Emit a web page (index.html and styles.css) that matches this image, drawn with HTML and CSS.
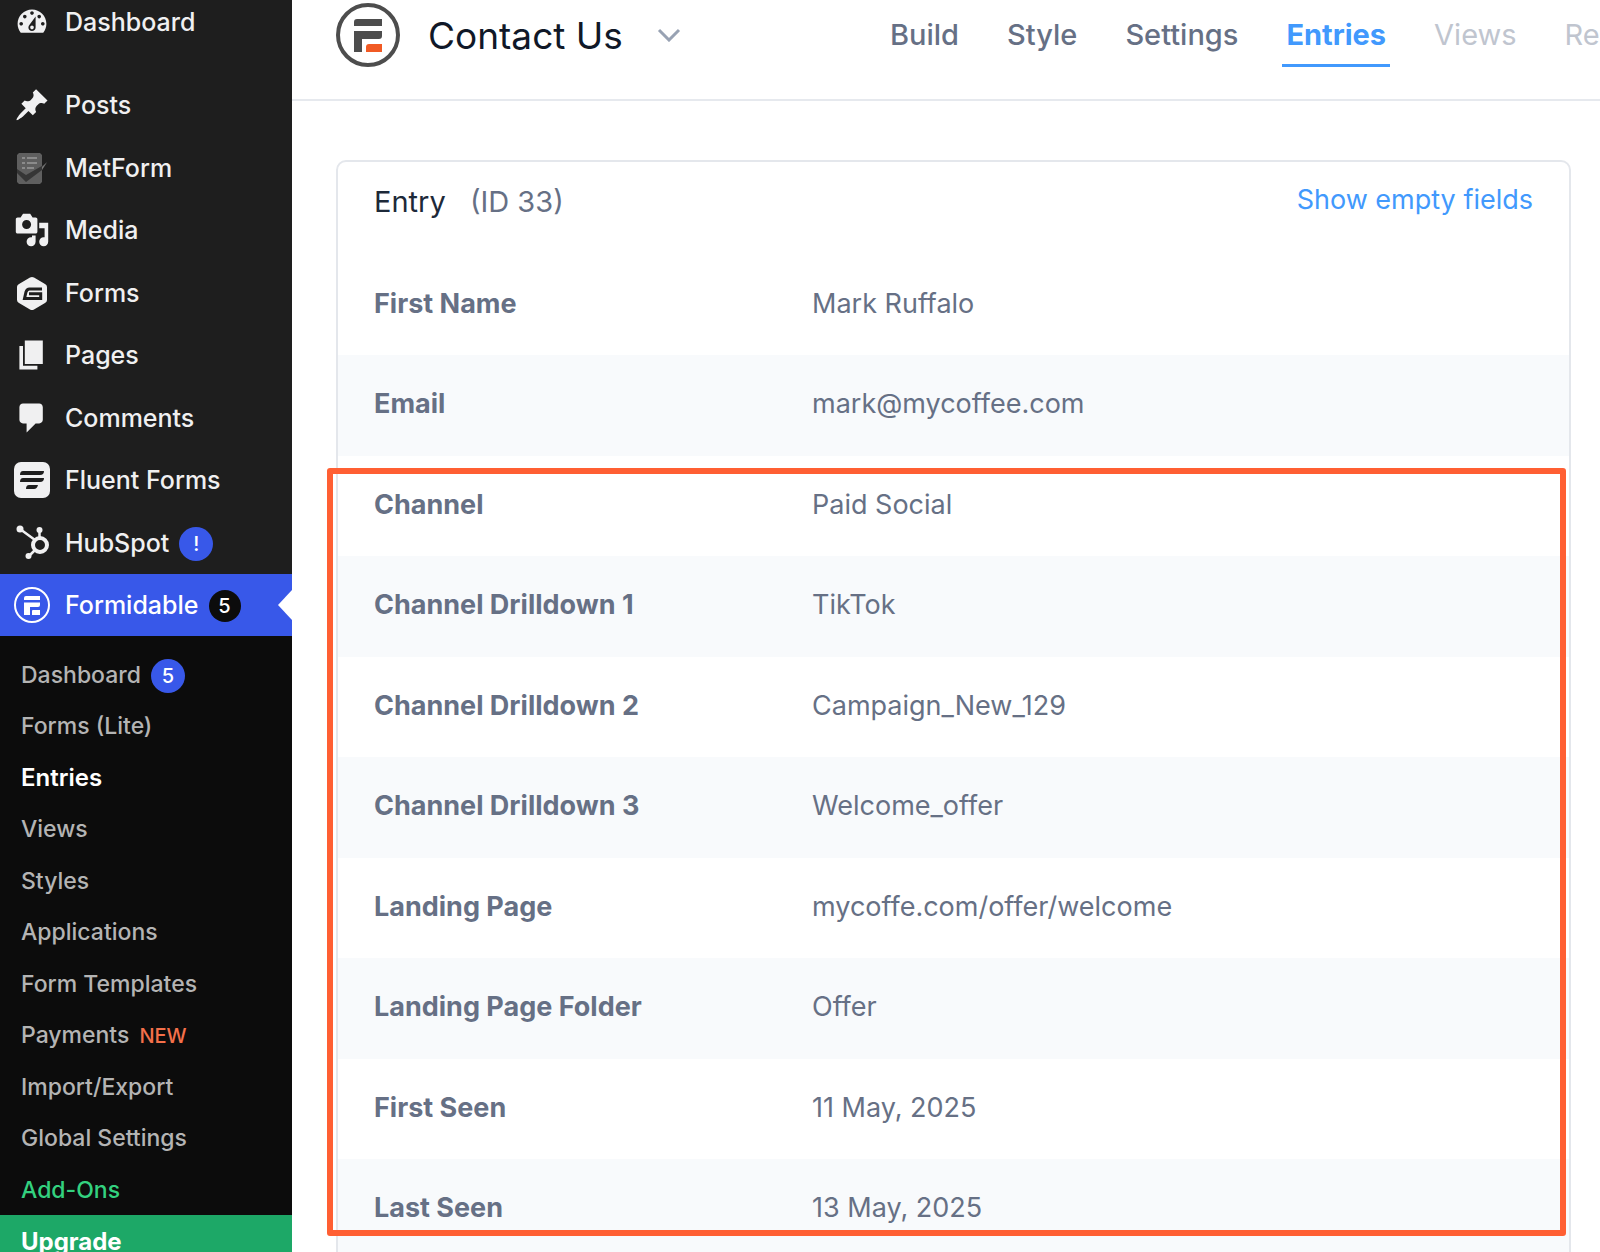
FILE: index.html
```html
<!DOCTYPE html>
<html lang="en">
<head>
    <meta charset="UTF-8">
    <meta name="viewport" content="width=device-width, initial-scale=1.0">
    <title>Contact Us - Entries</title>
    <link rel="stylesheet" href="styles.css">
</head>
<body>
    <div class="layout">
        <nav class="sidebar" aria-label="Admin menu">
            <ul class="menu-top">
                <li><a class="menu-item" href="#dashboard">
                    <svg class="icon" viewBox="0 0 20 20"><path d="M3.76 16h12.48c1.1-1.37 1.76-3.11 1.76-5 0-4.42-3.58-8-8-8s-8 3.58-8 8c0 1.89.66 3.63 1.76 5zM10 4c.55 0 1 .45 1 1s-.45 1-1 1-1-.45-1-1 .45-1 1-1zM6 6c.55 0 1 .45 1 1s-.45 1-1 1-1-.45-1-1 .45-1 1-1zm8 0c.55 0 1 .45 1 1s-.45 1-1 1-1-.45-1-1 .45-1 1-1zm-5.37 5.55L12 7v6c0 1.1-.9 2-2 2s-2-.9-2-2c0-.57.24-1.08.63-1.45zM4 10c.55 0 1 .45 1 1s-.45 1-1 1-1-.45-1-1 .45-1 1-1zm12 0c.55 0 1 .45 1 1s-.45 1-1 1-1-.45-1-1 .45-1 1-1zm-5 3c0-.55-.45-1-1-1s-1 .45-1 1 .45 1 1 1 1-.45 1-1z"/></svg>
                    Dashboard</a></li>
            </ul>
            <ul class="menu">
                <li><a class="menu-item" href="#posts">
                    <svg class="icon" viewBox="0 0 20 20"><path d="M10.44 3.02l1.82-1.82 6.36 6.35-1.83 1.82c-1.05-.68-2.48-.57-3.41.36l-.75.75c-.92.93-1.04 2.35-.35 3.41l-1.83 1.82-2.41-2.41-2.8 2.79c-.42.42-3.38 2.71-3.8 2.29s1.86-3.39 2.28-3.81l2.79-2.79L4.1 9.36l1.83-1.82c1.05.69 2.48.57 3.4-.36l.75-.75c.93-.92 1.05-2.35.36-3.41z"/></svg>
                    Posts</a></li>
                <li><a class="menu-item" href="#metform">
                    <svg class="icon" viewBox="0 0 36 36">
                        <path fill="#5f5f5f" d="M5 3h21l2 2v27l-2 2H5l-2-2V5z"/>
                        <path stroke="#8b8b8b" stroke-width="2" d="M8 8h3M13 8h10M8 13h3M13 13h10M8 18h3M13 18h7"/>
                        <path fill="#363636" d="M3 19l9 6 21-12-5 7-16 12-9-9z"/>
                        <path fill="#777" d="M28 17l5-5-5 8z"/>
                    </svg>
                    MetForm</a></li>
                <li><a class="menu-item" href="#media">
                    <svg class="icon" viewBox="0 0 20 20"><path d="M13 11V4c0-.55-.45-1-1-1h-1.67L9 1H5L3.67 3H2c-.55 0-1 .45-1 1v7c0 .55.45 1 1 1h10c.55 0 1-.45 1-1zM7 4.5c1.38 0 2.5 1.12 2.5 2.5S8.38 9.5 7 9.5 4.5 8.38 4.5 7 5.62 4.5 7 4.5zM14 6h5v10.5c0 1.38-1.12 2.5-2.5 2.5S14 17.88 14 16.5s1.12-2.5 2.5-2.5c.17 0 .34.02.5.05V9h-3V6zm-4 8.05V13h2v3.5c0 1.38-1.12 2.5-2.5 2.5S7 17.88 7 16.5 8.12 14 9.5 14c.17 0 .34.02.5.05z"/></svg>
                    Media</a></li>
                <li><a class="menu-item" href="#gravity">
                    <svg class="icon" viewBox="0 0 36 36">
                        <path d="M16 2.500q2-1 4 0l11 6.500q2 1 2 3v13q0 2-2 3l-11 6.500q-2 1-4 0l-11-6.500q-2-1-2-3V12q0-2 2-3z"/>
                        <path fill="none" stroke="#1e1e1e" stroke-width="3" d="M28 14H15.500q-2.500 0-3.500 3l-1.500 6.500h16.200v-4.800H15"/>
                    </svg>
                    Forms</a></li>
                <li><a class="menu-item" href="#pages">
                    <svg class="icon" viewBox="0 0 20 20"><path d="M6 15V2h10v13H6zm-1 1h8v2H3V5h2v11z"/></svg>
                    Pages</a></li>
                <li><a class="menu-item" href="#comments">
                    <svg class="icon" viewBox="0 0 20 20"><path d="M5 2h9c1.100 0 2 .9 2 2v7c0 1.100-.9 2-2 2h-2l-5 5v-5H5c-1.100 0-2-.9-2-2V4c0-1.100.9-2 2-2z"/></svg>
                    Comments</a></li>
                <li><a class="menu-item" href="#fluent">
                    <svg class="icon" viewBox="0 0 36 36">
                        <rect width="36" height="36" rx="7"/>
                        <path fill="#1e1e1e" d="M9 9h21q0 4-4 4H6q0-4 3-4zM9 16h21q0 4-4 4H6q0-4 3-4zM15 23h9q-1 4-4 4h-8q0-4 3-4z"/>
                    </svg>
                    Fluent Forms</a></li>
                <li><a class="menu-item" href="#hubspot">
                    <svg class="icon" viewBox="0 0 36 36">
                        <g fill="none" stroke="#f0f0f1">
                            <circle cx="26" cy="20" r="7" stroke-width="4"/>
                            <path stroke-width="2.500" d="M6 4l15 11M25.500 5v8M21 25l-6 6"/>
                        </g>
                        <circle cx="6" cy="4" r="3.500"/><circle cx="25.500" cy="5" r="3"/><circle cx="14.500" cy="31" r="3"/>
                    </svg>
                    HubSpot <span class="badge">!</span></a></li>
                <li class="current"><a class="menu-item" href="#formidable" aria-current="true">
                    <svg class="icon" viewBox="0 0 36 36">
                        <circle cx="18" cy="18" r="17" fill="none" stroke="#fff" stroke-width="2"/>
                        <path fill="#fff" d="M12 9h14v4H10v-2q0-2 2-2zM10 15.500h16v2.500q0 2-2 2h-8v8h-6zM19 23h7v5h-8v-4q0-1 1-1z"/>
                    </svg>
                    Formidable <span class="badge badge-dark">5</span></a></li>
            </ul>
            <ul class="submenu">
                <li><a href="#overview">Dashboard <span class="badge">5</span></a></li>
                <li><a href="#forms-lite">Forms (Lite)</a></li>
                <li><a class="selected" href="#entries">Entries</a></li>
                <li><a href="#views">Views</a></li>
                <li><a href="#styles">Styles</a></li>
                <li><a href="#applications">Applications</a></li>
                <li><a href="#templates">Form Templates</a></li>
                <li><a href="#payments">Payments <span class="new">NEW</span></a></li>
                <li><a href="#import">Import/Export</a></li>
                <li><a href="#settings">Global Settings</a></li>
                <li><a class="addons" href="#addons">Add-Ons</a></li>
                <li><a class="upgrade" href="#upgrade">Upgrade</a></li>
            </ul>
        </nav>

        <div class="content">
            <header class="topbar">
                <div class="form-name">
                    <svg class="logo" viewBox="0 0 64 64">
                        <circle cx="32" cy="32" r="30" fill="#fff" stroke="#4d4d4d" stroke-width="4"/>
                        <path fill="#4d4d4d" d="M21 16h25v7H18v-4q0-3 3-3zM18 28h28v5q0 3-3 3H26v13h-8z"/>
                        <path fill="#f15a24" d="M33 41h13v8H30v-5q0-3 3-3z"/>
                    </svg>
                    <h1>Contact Us</h1>
                    <button class="switcher" type="button" aria-label="Switch form">
                        <svg viewBox="0 0 24 14"><path d="M2 2l10 10L22 2" fill="none" stroke="#98a2b3" stroke-width="3"/></svg>
                    </button>
                </div>
                <nav class="tabs" aria-label="Form">
                    <a href="#build">Build</a>
                    <a href="#style">Style</a>
                    <a href="#form-settings">Settings</a>
                    <a class="active" href="#form-entries">Entries</a>
                    <a class="muted" href="#form-views">Views</a>
                    <a class="muted" href="#reports">Reports</a>
                </nav>
            </header>

            <main class="card">
                <div class="card-header">
                    <h2>Entry <span class="entry-id">(ID 33)</span></h2>
                    <a href="#show-empty">Show empty fields</a>
                </div>
                <table class="fields">
                    <tbody>
                        <tr><th scope="row">First Name</th><td>Mark Ruffalo</td></tr>
                        <tr><th scope="row">Email</th><td>mark@mycoffee.com</td></tr>
                        <tr><th scope="row">Channel</th><td>Paid Social</td></tr>
                        <tr><th scope="row">Channel Drilldown 1</th><td>TikTok</td></tr>
                        <tr><th scope="row">Channel Drilldown 2</th><td>Campaign_New_129</td></tr>
                        <tr><th scope="row">Channel Drilldown 3</th><td>Welcome_offer</td></tr>
                        <tr><th scope="row">Landing Page</th><td>mycoffe.com/offer/welcome</td></tr>
                        <tr><th scope="row">Landing Page Folder</th><td>Offer</td></tr>
                        <tr><th scope="row">First Seen</th><td>11 May, 2025</td></tr>
                        <tr><th scope="row">Last Seen</th><td>13 May, 2025</td></tr>
                    </tbody>
                </table>
                <div class="highlight"></div>
            </main>
        </div>
    </div>
</body>
</html>
```
FILE: styles.css
```css
* {
    box-sizing: border-box;
}

body {
    margin: 0;
    font-family: Inter, "Liberation Sans", sans-serif;
    font-size: 27px;
    color: #667085;
    background: #fff;
}

a {
    color: inherit;
    text-decoration: none;
}

ul {
    list-style: none;
    margin: 0;
    padding: 0;
}

.layout {
    display: flex;
    height: 100vh;
    overflow: hidden;
}

/* Sidebar */
.sidebar {
    flex: 0 0 292px;
    background: #1e1e1e;
    color: #f0f0f1;
    font-size: 25px;
    font-weight: 500;
}

.menu-top {
    display: grid;
    grid-auto-rows: 44px;
    margin-bottom: 30px;
}

.menu {
    display: grid;
    grid-auto-rows: 62px 63px;
}

.menu-item {
    display: flex;
    align-items: center;
    height: 100%;
    padding-left: 14px;
}

.icon {
    width: 36px;
    height: 36px;
    margin-right: 15px;
    fill: #f0f0f1;
}

.current {
    position: relative;
    background: #3858e9;
    color: #fff;
}

.current::after {
    content: "";
    position: absolute;
    right: 0;
    top: 16px;
    border: 15px solid transparent;
    border-left: 0;
    border-right: 14px solid #fff;
}

.badge {
    display: inline-flex;
    align-items: center;
    justify-content: center;
    width: 34px;
    height: 34px;
    margin: 2px 0 0 10px;
    border-radius: 50%;
    background: #3858e9;
    color: #fff;
    font-size: 20px;
    font-weight: 500;
}

.badge-dark {
    width: 32px;
    height: 32px;
    background: #0c0c0c;
}

.submenu {
    display: grid;
    grid-auto-rows: 51px 52px;
    padding-top: 13px;
    background: #0c0c0c;
    color: #b4b4b4;
    font-size: 23px;
}

.submenu a {
    display: flex;
    align-items: center;
    height: 100%;
    padding-left: 21px;
}

.submenu .selected {
    color: #fff;
    font-size: 24px;
    font-weight: 600;
}

.new {
    margin: 2px 0 0 10px;
    color: #f4704a;
    font-size: 20px;
}

.submenu .addons {
    color: #33d17f;
}

.submenu .upgrade {
    background: #1da867;
    color: #fff;
    font-size: 24px;
    font-weight: 700;
}

/* Form header */
.content {
    flex: 1;
    min-width: 0;
    overflow: hidden;
}

.topbar {
    display: flex;
    height: 101px;
    padding: 3px 0 0 44px;
    border-bottom: 2px solid #e6e9ee;
}

.form-name {
    display: flex;
    flex: 0 0 550px;
    align-items: center;
    height: 64px;
}

.logo {
    width: 64px;
    height: 64px;
    margin-right: 28px;
}

h1 {
    margin: 0;
    color: #101828;
    font-size: 37px;
    font-weight: 400;
}

.switcher {
    display: flex;
    margin-left: 34px;
    padding: 0;
    border: 0;
    background: none;
}

.switcher svg {
    width: 24px;
    height: 14px;
}

.tabs {
    display: flex;
    gap: 40px;
    height: 64px;
    font-size: 29px;
    font-weight: 500;
}

.tabs a {
    padding: 0 4px;
    border-bottom: 3px solid transparent;
    line-height: 64px;
}

.tabs .active {
    border-color: #4199fd;
    color: #4199fd;
    font-weight: 700;
}

.tabs .muted {
    color: #c0c5cf;
    font-weight: 400;
}

/* Entry */
.card {
    position: relative;
    margin: 59px 29px 0 44px;
    border: 2px solid #e4e7ec;
    border-radius: 10px;
}

.card-header {
    display: flex;
    justify-content: space-between;
    height: 93px;
    padding: 0 36px;
    line-height: 80px;
}

.card-header a {
    color: #4199fd;
    line-height: 76px;
}

h2 {
    margin: 0;
    color: #1d2939;
    font-size: 29px;
    font-weight: 400;
}

.entry-id {
    margin-left: 16px;
    color: #667085;
}

.fields {
    width: 100%;
    border-collapse: collapse;
}

.fields tr {
    height: 100px;
}

.fields tr:nth-child(even) {
    height: 101px;
    background: #f8fafc;
}

.fields th,
.fields td {
    padding: 0 0 4px 36px;
    text-align: left;
}

.fields th {
    width: 438px;
    font-weight: 700;
}

/* Frame around the tracking fields */
.highlight {
    position: absolute;
    top: 306px;
    right: 3px;
    left: -11px;
    height: 768px;
    border: 6px solid #ff5f33;
    border-radius: 3px;
    pointer-events: none;
}
```
